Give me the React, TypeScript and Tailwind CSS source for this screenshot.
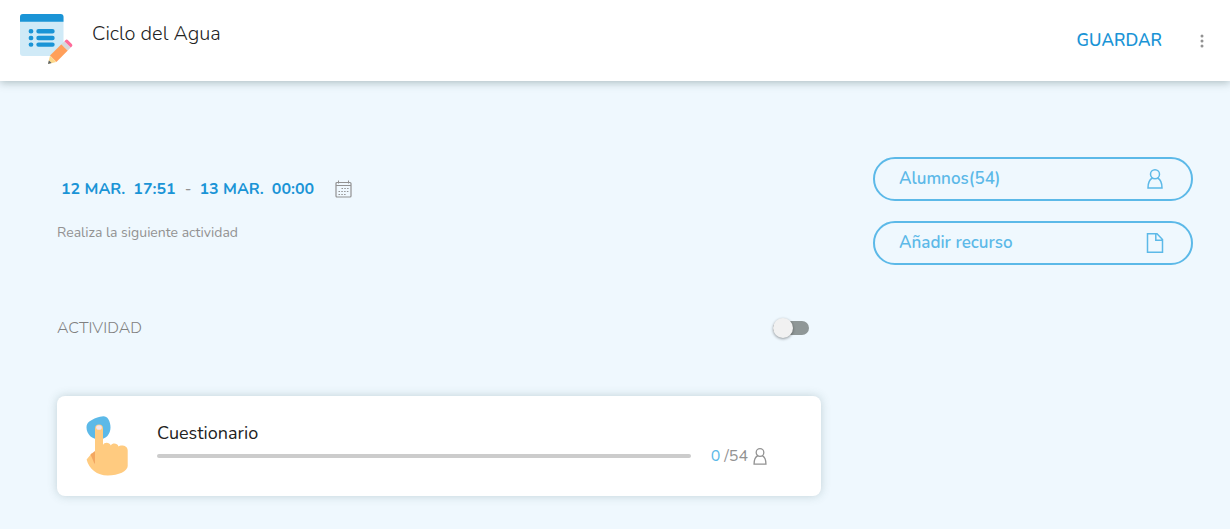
import { useState } from "react";

function FormIcon() {
  return (
    <svg width="54" height="52" viewBox="0 0 54 52" aria-hidden="true" className="shrink-0">
      <rect x="0" y="0" width="43.500" height="42" rx="3" fill="#d0eaf7" />
      <path d="M3 0h37.500a3 3 0 0 1 3 3v4.700H0V3a3 3 0 0 1 3-3z" fill="#1a94d6" />
      <g stroke="#1a94d6" strokeWidth="4.4" strokeLinecap="round">
        <path d="M10.800 17.200h.4M18.500 17.200h14M10.800 24h.4M18.500 24h14M10.800 30.600h.4M18.500 30.600h14" />
      </g>
      <path d="M28 50l2-8.200 6.200 6.200z" fill="#fcd88a" />
      <path d="M28 50l.9-3.600 2.700 2.700z" fill="#56606a" />
      <path d="M30 41.600L41.400 30.200l6.400 6.400L36.400 48z" fill="#ff9f5a" />
      <path d="M41.400 30.200l3-3 6.400 6.400-3 3z" fill="#d5d9dc" />
      <path d="M44.400 27.200l1-1a1.800 1.800 0 0 1 2.600 0l3.800 3.800a1.800 1.800 0 0 1 0 2.600l-1 1z" fill="#ff6b9a" />
    </svg>
  );
}

function TapIcon() {
  return (
    <svg width="44" height="62" viewBox="0 0 44 62" aria-hidden="true" className="shrink-0">
      <path d="M14 1.800c4-1.200 6.500-.5 8.200 2.200 1.700 2.800 2.300 5.500 2.300 8.500 0 7-5 12-11.500 12S.5 19.500.5 12.500c0-2.500.7-4.500 2.800-6C6.500 4.200 10.500 2.800 14 1.800z" fill="#5cb9e8" />
      <path d="M9 50V13.500a4 4 0 0 1 8 0V30c1-3 6.500-3.200 7.800.5 1.700-2.800 6.500-2.500 7.700 1 2-1.800 9.200-1.500 9.200 4V51c0 5-9 9.500-20 9.500C11 60.500 3 54 .6 44.500L6 38l3 12z" fill="#ffcb80" />
      <path d="M4.500 39.500L9 36v14z" fill="#f3a760" />
      <ellipse cx="13" cy="12.500" rx="2.800" ry="2.300" fill="#f7e4e8" />
    </svg>
  );
}

function PersonIcon({ className }: { className: string }) {
  return (
    <svg viewBox="0 0 16 20" fill="none" stroke="currentColor" strokeWidth="1.500" aria-hidden="true" className={className}>
      <circle cx="8" cy="5.300" r="4.500" />
      <path d="M5.500 9C2.500 10.500 1 13.500 1 19h14c0-5.500-1.500-8.500-4.500-10" />
    </svg>
  );
}

function PageIcon() {
  return (
    <svg viewBox="0 0 18 20" fill="none" stroke="currentColor" strokeWidth="1.500" aria-hidden="true" className="h-5 w-[18px]">
      <path d="M1.500 .8h9.500L16.500 6.500v12.700h-15zM9.800 .8V7.300h6.700" />
    </svg>
  );
}

function CalendarIcon() {
  return (
    <svg width="17" height="18" viewBox="0 0 17 18" fill="none" stroke="currentColor" aria-hidden="true">
      <rect x="1" y="2.500" width="15" height="14.500" rx="1" strokeWidth="1.200" />
      <path d="M1 5.500h15M3.500 .5v3M13.500 .5v3" />
      <path d="M6.500 8.500h8M3.500 11.500h11M3.500 14.500h8" strokeDasharray="1.500 1.300" />
    </svg>
  );
}

export default function App() {
  const [enabled, setEnabled] = useState(false);
  return (
    <div className="min-h-screen bg-[#eff8fe] font-['Nunito','Open_Sans',sans-serif] text-[#929292]">
      <header className="flex h-[81px] items-center bg-white pr-[18px] pl-5 shadow-[0_2px_8px_rgba(60,90,90,0.35)]">
        <div className="flex grow items-start gap-[18px] pb-0.5">
          <FormIcon />
          <h1 className="mt-1 text-xl leading-8 font-light text-[#222]">Ciclo del Agua</h1>
        </div>
        <div className="flex items-center gap-[30px]">
          <button type="button" className="text-[17px] leading-6 font-semibold text-[#1a94d6]">GUARDAR</button>
          <button type="button" aria-label="Más opciones" className="flex h-6 w-5 items-center justify-center">
            <svg width="4" height="14" viewBox="0 0 4 14" fill="currentColor" aria-hidden="true">
              <circle cx="2" cy="2" r="1.500" /><circle cx="2" cy="7" r="1.500" /><circle cx="2" cy="12" r="1.500" />
            </svg>
          </button>
        </div>
      </header>
      <main className="grid grid-cols-[minmax(0,1fr)_320px] gap-[52px] pt-[76px] pr-[37px] pb-8 pl-[57px]">
        <div>
          <div className="mt-5 flex h-6 items-center pl-1">
            <button type="button" className="flex gap-2 text-base leading-6 font-bold text-[#1a94d6]">
              <span>12 MAR.</span><span>17:51</span>
            </button>
            <span className="pr-2 pl-[9px]">-</span>
            <button type="button" className="flex gap-2 text-base leading-6 font-bold text-[#1a94d6]">
              <span>13 MAR.</span><span>00:00</span>
            </button>
            <button type="button" aria-label="Calendario" className="ml-[21px]"><CalendarIcon /></button>
          </div>
          <p className="mt-5 text-sm leading-6">Realiza la siguiente actividad</p>
          <div className="mt-[71px] flex items-center justify-between pr-3">
            <h2 className="text-base leading-6 font-light text-[#808080]">ACTIVIDAD</h2>
            <label className="relative flex h-5 w-9 cursor-pointer items-center">
              <input
                type="checkbox"
                role="switch"
                aria-label="Actividad"
                checked={enabled}
                onChange={(e) => setEnabled(e.target.checked)}
                className="peer h-3.5 w-9 cursor-pointer appearance-none rounded-full bg-[#8f9797] checked:bg-[#5cb9e8]"
              />
              <span className="absolute left-0 size-5 rounded-full bg-[#f1f1f1] shadow-[0_1px_3px_rgba(0,0,0,0.4)] peer-checked:left-4" />
            </label>
          </div>
          <section className="mt-14 flex h-[100px] items-center rounded-lg bg-white pr-[53px] pl-[29px] shadow-[0_0_10px_rgba(60,100,100,0.25)]">
            <TapIcon />
            <div className="ml-[27px] grow pb-0.5">
              <h3 className="text-lg leading-[22px] text-[#222]">Cuestionario</h3>
              <div className="flex items-center gap-5">
                <div role="progressbar" aria-label="Cuestionario" aria-valuemin={0} aria-valuemax={54} aria-valuenow={0} className="h-1 grow rounded-full bg-[#ccc]" />
                <div className="flex items-center gap-1 text-base leading-6">
                  <span className="text-[#5cb9e8]">0</span><span>/54</span>
                  <PersonIcon className="h-[17px] w-4" />
                </div>
              </div>
            </div>
          </section>
        </div>
        <aside className="flex flex-col gap-5">
          <button type="button" className="flex h-11 items-center justify-between rounded-full border-2 border-[#5cb9e8] pr-[27px] pl-6 text-[17px] font-semibold text-[#5cb9e8]">
            Alumnos(54)
            <PersonIcon className="h-5 w-[18px]" />
          </button>
          <button type="button" className="flex h-11 items-center justify-between rounded-full border-2 border-[#5cb9e8] pr-[27px] pl-6 text-[17px] font-semibold text-[#5cb9e8]">
            Añadir recurso
            <PageIcon />
          </button>
        </aside>
      </main>
    </div>
  );
}
